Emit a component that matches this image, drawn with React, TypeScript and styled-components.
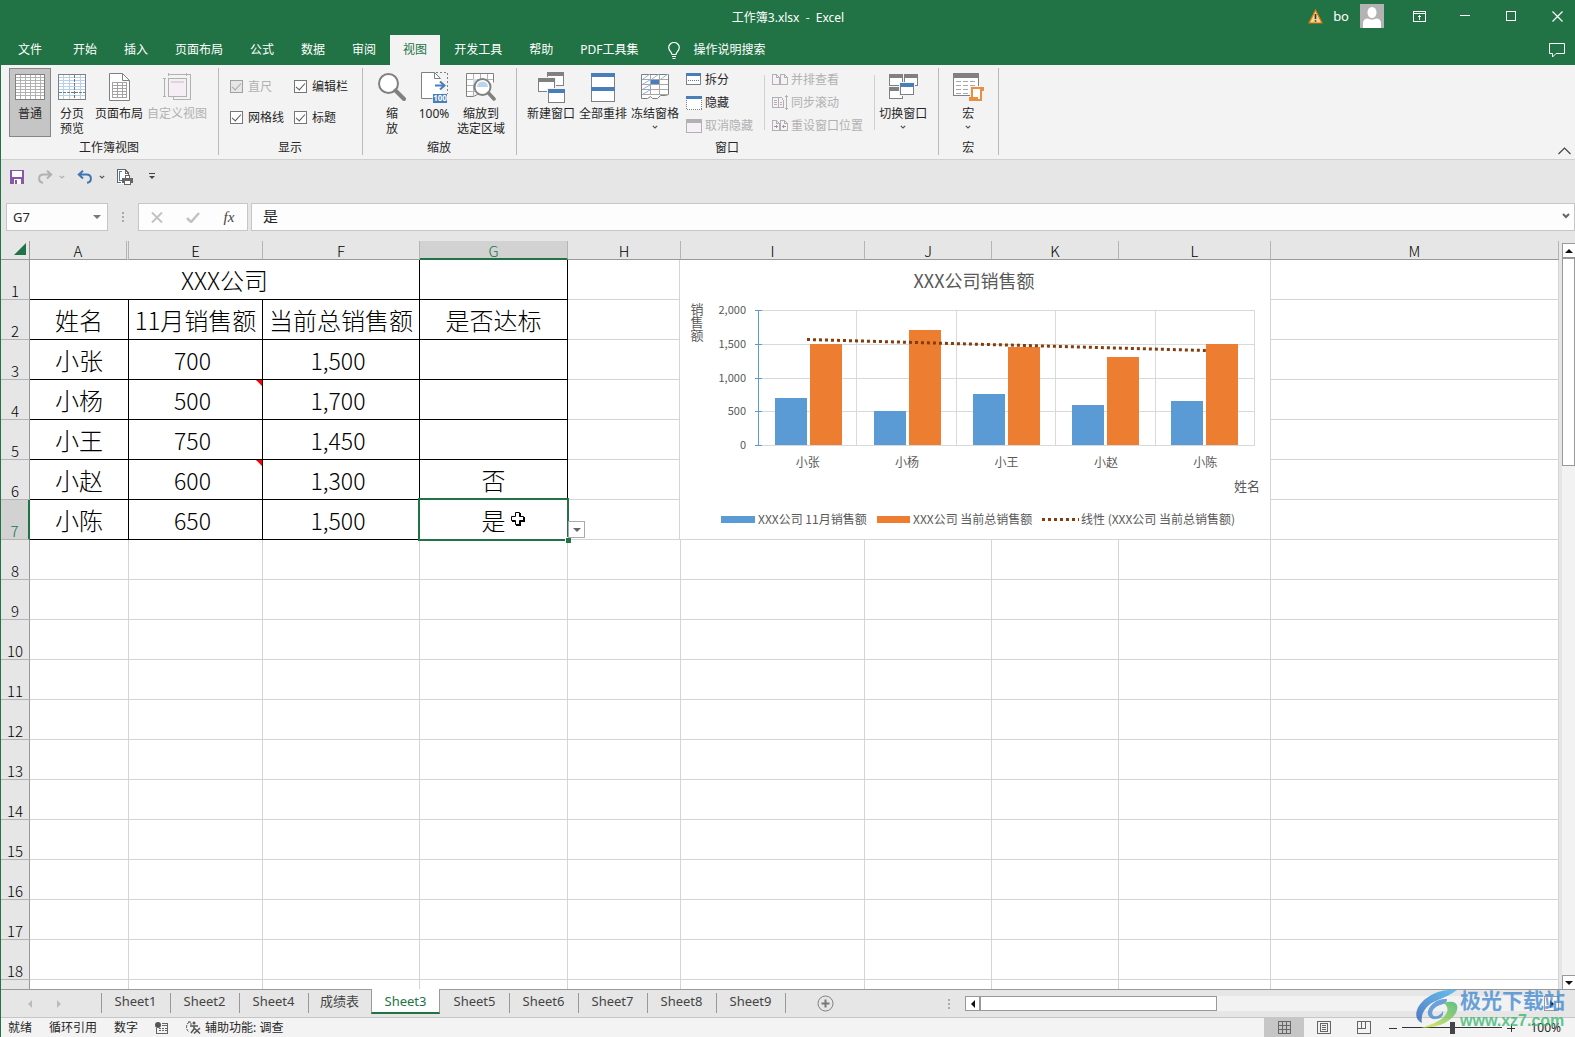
import React from "react";
import styled, { createGlobalStyle, css } from "styled-components";

const color = {
  green: "#217346",
  ribbon: "#f3f3f3",
  chrome: "#e6e6e6",
  line: "#c6c6c6",
  grid: "#d4d4d4",
  ink: "#262626",
  muted: "#b1b1b1",
  icon: "#808080",
  blue: "#4a7ebb",
};

const uiFont = `"Noto Sans", "Noto Sans CJK SC", sans-serif`;
const cellFont = `"Noto Sans CJK SC", "Noto Sans", sans-serif`;

const GlobalStyle = createGlobalStyle`
  *, *::before, *::after { box-sizing: border-box; }
  body { margin: 0; background: ${color.chrome}; }
  button, input { font: inherit; color: inherit; margin: 0; padding: 0; }
  button { border: 0; background: none; }
  svg { display: block; flex: none; }
`;

const Window = styled.div`
  position: relative;
  display: flex;
  flex-direction: column;
  height: 100vh;
  overflow: hidden;
  border-left: 1px solid ${color.green};
  background: ${color.chrome};
  color: ${color.ink};
  font: 12px/16px ${uiFont};
`;

/* ---------- title bar and tabs ---------- */

const TitleBar = styled.header`
  display: grid;
  grid-template-columns: 1fr auto 1fr;
  align-items: center;
  height: 35px;
  background: ${color.green};
  color: #fff;
`;

const DocumentTitle = styled.h1`
  grid-column: 2;
  margin: 0;
  font-size: 12px;
  font-weight: 400;
  white-space: pre;
`;

const TitleActions = styled.div`
  display: flex;
  justify-content: flex-end;
  align-items: center;
  gap: 10px;
  height: 32px;
  align-self: start;
`;

const UserName = styled.span`
  font-size: 13px;
`;

const Account = styled.button`
  display: flex;
  align-items: center;
  gap: 11px;
  margin-right: 7px;
`;

const WindowButton = styled.button`
  display: flex;
  align-items: center;
  justify-content: center;
  width: 36px;
  height: 32px;
`;

const TabBar = styled.nav`
  display: flex;
  align-items: stretch;
  gap: 1px;
  height: 30px;
  background: ${color.green};
  color: #fff;
`;

const RibbonTab = styled.button<{ $active?: boolean; $file?: boolean }>`
  padding: 0 ${(p) => (p.$file ? 17 : 13)}px;
  background: ${(p) => (p.$active ? color.ribbon : "transparent")};
  color: ${(p) => (p.$active ? color.green : "#fff")};
  white-space: nowrap;
`;

const TellMe = styled.button`
  display: flex;
  align-items: center;
  gap: 13px;
  margin-left: 16px;
  white-space: nowrap;
`;

const CommentButton = styled.button`
  margin: 0 10px 0 auto;
`;

/* ---------- ribbon ---------- */

const Ribbon = styled.section`
  display: flex;
  height: 95px;
  flex: none;
  padding: 3px 0 4px;
  border-bottom: 1px solid #d2d0ce;
  background: ${color.ribbon};
`;

const Group = styled.div`
  display: flex;
  flex-direction: column;
  padding: 0 9px 0 8px;
  border-right: 1px solid #bababa;
`;

const GroupBody = styled.div`
  display: flex;
  flex: none;
  height: 69px;
`;

const GroupLabel = styled.div`
  padding-top: 4px;
  line-height: 14px;
  text-align: center;
`;

const BigButton = styled.button<{ $pressed?: boolean }>`
  display: flex;
  flex-direction: column;
  align-items: center;
  min-width: 42px;
  padding: 3px 2px 0;
  white-space: pre;
  ${(p) =>
    p.$pressed &&
    css`
      background: #c5c5c5;
      box-shadow: inset 0 0 0 1px #868686;
    `}
  &:disabled {
    color: ${color.muted};
  }
`;

const BigIcon = styled.span`
  display: flex;
  align-items: center;
  justify-content: center;
  height: 32px;
`;

const BigLabel = styled.span`
  padding-top: 3px;
  line-height: 15px;
`;

const MenuMark = styled.span`
  padding-top: 4px;
`;

const CheckGrid = styled.div`
  display: grid;
  grid-template-columns: 64px 59px;
  grid-auto-rows: 31px;
  align-items: center;
  padding: 3px 0 0 3px;
`;

const CheckLabel = styled.label<{ $disabled?: boolean }>`
  display: flex;
  align-items: center;
  gap: 5px;
  color: ${(p) => (p.$disabled ? color.muted : "inherit")};
  white-space: nowrap;
`;

const CheckBox = styled.input`
  appearance: none;
  display: grid;
  place-items: center;
  width: 13px;
  height: 13px;
  border: 1px solid #767676;
  background: #fff;
  &:checked::before {
    content: "";
    width: 9px;
    height: 5px;
    margin-top: -2px;
    border: solid #555;
    border-width: 0 0 1px 1px;
    transform: rotate(-48deg);
  }
  &:disabled {
    border-color: #a0a0a0;
    background: #e6e6e6;
  }
  &:disabled::before {
    border-color: #a8a8a8;
  }
`;

const SmallColumn = styled.div`
  display: flex;
  flex-direction: column;
  padding: 0 11px 0 5px;
`;

const SmallButton = styled.button`
  display: flex;
  align-items: center;
  gap: 3px;
  height: 23px;
  white-space: nowrap;
  &:disabled {
    color: ${color.muted};
  }
`;

const SmallIconSlot = styled.span`
  display: grid;
  place-items: center;
  width: 16px;
`;

const Divider = styled.span`
  width: 1px;
  margin: 7px 2px 7px 0;
  background: #d0d0d0;
`;

const CollapseButton = styled.button`
  align-self: flex-end;
  margin: 0 4px 0 auto;
`;

/* ---------- quick access and formula bar ---------- */

const QuickAccess = styled.div`
  display: flex;
  align-items: center;
  gap: 12px;
  height: 33px;
  flex: none;
  padding-left: 8px;
`;

const QuickButton = styled.button`
  display: flex;
  align-items: center;
  justify-content: center;
  gap: 6px;
  min-width: 12px;
`;

const FormulaRow = styled.div`
  display: flex;
  height: 28px;
  flex: none;
  margin-top: 10px;
  padding-left: 5px;
`;

const Field = styled.div`
  display: flex;
  align-items: center;
  border: 1px solid ${color.line};
  background: #fdfdfd;
`;

const NameField = styled(Field)`
  width: 102px;
  padding: 0 6px;
`;

const TextInput = styled.input<{ $size: number }>`
  flex: 1;
  min-width: 0;
  border: 0;
  outline: 0;
  background: none;
  font-size: ${(p) => p.$size}px;
`;

const Grip = styled.span`
  display: grid;
  place-items: center;
  width: 30px;
`;

const FormulaField = styled(Field)`
  flex: 1;
  margin-left: 3px;
  padding: 0 4px 3px 11px;
`;

const FormulaButton = styled.button`
  display: grid;
  place-items: center;
  width: 36px;
`;

const FxMark = styled.i`
  color: #444;
  font: italic 15px/20px "Liberation Serif", serif;
`;

/* ---------- worksheet ---------- */

const SheetArea = styled.main`
  display: flex;
  flex: 1;
  min-height: 0;
`;

const SheetView = styled.div`
  position: relative;
  flex: 1;
  min-width: 0;
  padding-top: 10px;
  overflow: hidden;
`;

const SheetTable = styled.table`
  width: 100%;
  table-layout: fixed;
  border-collapse: separate;
  border-spacing: 0;
  font-family: ${cellFont};
`;

const Corner = styled.td`
  padding: 0;
  border: solid #999;
  border-width: 0 1px 1px 0;
`;

const CornerMark = styled.div`
  width: 0;
  margin: 0 3px 3px auto;
  border: 6px solid transparent;
  border-right-color: ${color.green};
  border-bottom-color: ${color.green};
`;

const ColumnHead = styled.th<{ $selected?: boolean; $hiddenAfter?: boolean }>`
  height: 19px;
  padding: 2px 0 0;
  border-right: ${(p) => (p.$hiddenAfter ? "3px double" : "1px solid")} #b4b4b4;
  border-bottom: 1px solid #999;
  color: #000;
  font-size: 15px;
  font-weight: 300;
  line-height: 16px;
  ${(p) =>
    p.$selected &&
    css`
      border-bottom: 2px solid ${color.green};
      background: #d2d2d2;
      color: ${color.green};
      line-height: 15px;
    `}
`;

const RowHead = styled.th<{ $selected?: boolean }>`
  height: 40px;
  padding: 0;
  border-right: ${(p) => (p.$selected ? `2px solid ${color.green}` : "1px solid #999")};
  border-bottom: 1px solid #b4b4b4;
  background: ${(p) => (p.$selected ? "#d2d2d2" : "transparent")};
  color: ${(p) => (p.$selected ? color.green : "#000")};
  font-size: 15px;
  font-weight: 300;
  line-height: 16px;
  vertical-align: bottom;
`;

const Cell = styled.td<{ $boxed?: boolean; $numeric?: boolean }>`
  position: relative;
  height: 40px;
  padding: 0 ${(p) => (p.$numeric ? 6 : 0)}px 0 0;
  border: solid ${(p) => (p.$boxed ? "#000" : color.grid)};
  border-width: 0 1px 1px 0;
  background: #fff;
  color: #000;
  font-size: ${(p) => (p.$numeric ? 23 : 24)}px;
  font-weight: 300;
  line-height: 38px;
  text-align: center;
  white-space: nowrap;
`;

const NoteMark = styled.span`
  position: absolute;
  top: 0;
  right: 0;
  border: 3px solid transparent;
  border-top-color: #f00;
  border-right-color: #f00;
`;

const Selection = styled.span`
  position: absolute;
  inset: -2px;
  border: 2px solid ${color.green};
  z-index: 1;
  &::after {
    content: "";
    position: absolute;
    right: -4px;
    bottom: -4px;
    width: 6px;
    height: 6px;
    border: solid #fff;
    border-width: 1px 0 0 1px;
    background: ${color.green};
  }
`;

const ListButton = styled.button`
  position: absolute;
  left: 100%;
  bottom: 1px;
  z-index: 2;
  display: grid;
  place-items: center;
  width: 17px;
  height: 17px;
  margin-left: 1px;
  border: 1px solid #a5abb5;
  background: #fff;
`;

const Pointer = styled.svg`
  position: absolute;
  left: 90px;
  top: 11px;
  z-index: 2;
`;

const ChartFrame = styled.figure`
  position: absolute;
  left: 678px;
  top: 29px;
  margin: 0;
  border: 1px solid ${color.grid};
  border-top: 0;
  background: #fff;
`;

const ChartSvg = styled.svg`
  font-family: ${cellFont};
  fill: #595959;
`;

const ValueAxisTitle = styled.text`
  writing-mode: vertical-rl;
  font-size: 13px;
`;

/* ---------- scroll bars ---------- */

const VerticalScroll = styled.div`
  display: flex;
  flex-direction: column;
  width: 13px;
  flex: none;
  margin: 12px 0 -1px 3px;
  background: #f2f2f2;
`;

const HorizontalScroll = styled.div`
  display: flex;
  flex: 0 1 594px;
  height: 15px;
  margin: 6px 16px 0 15px;
  background: #f2f2f2;
`;

const ScrollButton = styled.button`
  display: grid;
  place-items: center;
  flex: none;
  width: 15px;
  height: 15px;
  border: 1px solid #999;
  background: #fff;
  ${VerticalScroll} & {
    width: 13px;
    border-right: 0;
  }
`;

const ScrollTrack = styled.div`
  flex: 1;
`;

const ScrollThumb = styled.div<{ $vertical?: boolean }>`
  width: ${(p) => (p.$vertical ? "100%" : "42%")};
  height: ${(p) => (p.$vertical ? "29%" : "100%")};
  border: 1px solid #999;
  background: #fff;
`;

/* ---------- sheet tabs and status ---------- */

const SheetBar = styled.div`
  display: flex;
  height: 29px;
  flex: none;
  border-top: 1px solid #999;
  border-bottom: 1px solid ${color.line};
`;

const SheetNav = styled.div`
  display: flex;
  align-items: center;
  gap: 23px;
  width: 100px;
  padding-left: 26px;
`;

const SheetTabs = styled.div`
  display: flex;
  align-items: flex-start;
`;

const SheetTab = styled.button<{ $active?: boolean; $short?: boolean }>`
  position: relative;
  min-width: ${(p) => (p.$short ? 0 : 69)}px;
  height: 23px;
  padding: 0 12px 1px;
  color: #444;
  font-size: 13px;
  line-height: 20px;
  &::before {
    content: "";
    position: absolute;
    left: 0;
    top: 3px;
    bottom: 0;
    width: 1px;
    background: #999;
  }
  &:last-child {
    box-shadow: 1px 0 #999;
    clip-path: inset(3px -1px 0 0);
  }
  ${(p) =>
    p.$active &&
    css`
      height: 25px;
      margin-top: -1px;
      padding-bottom: 0;
      border: solid #999;
      border-width: 0 1px;
      border-bottom: 2px solid ${color.green};
      background: #fff;
      color: ${color.green};
      &::before {
        display: none;
      }
      & + button::before {
        display: none;
      }
    `}
`;

const AddSheet = styled.button`
  margin-left: 32px;
`;

const SheetGrip = styled.span`
  display: flex;
  align-items: center;
  margin-left: auto;
`;

const StatusBar = styled.footer`
  display: flex;
  align-items: center;
  height: 19px;
  flex: none;
  padding-left: 7px;
  background: ${color.ribbon};
  line-height: 18px;
  white-space: nowrap;
`;

const StatusItems = styled.div`
  display: flex;
  align-items: center;
  gap: 17px;
`;

const StatusNote = styled.span`
  display: flex;
  align-items: center;
  gap: 4px;
`;

const ViewSwitch = styled.div`
  display: flex;
  align-self: stretch;
  margin-left: auto;
`;

const ViewButton = styled.button<{ $active?: boolean }>`
  display: grid;
  place-items: center;
  width: 40px;
  background: ${(p) => (p.$active ? "#c6c6c6" : "transparent")};
`;

const ZoomControl = styled.div`
  display: flex;
  align-items: center;
  gap: 5px;
  margin: 0 14px 0 5px;
`;

const ZoomRange = styled.input`
  appearance: none;
  width: 100px;
  height: 12px;
  background: linear-gradient(#333, #333) center / 100% 1px no-repeat;
  &::-webkit-slider-thumb {
    appearance: none;
    width: 5px;
    height: 12px;
    background: #444;
  }
`;

const ZoomValue = styled.span`
  padding-left: 10px;
`;

const Watermark = styled.aside`
  position: absolute;
  right: 10px;
  bottom: 6px;
  z-index: 5;
  display: flex;
  align-items: center;
  gap: 2px;
  opacity: 0.75;
  pointer-events: none;
`;

const WatermarkName = styled.div`
  color: #3b86cf;
  font: 700 21px/24px "Noto Sans CJK SC", sans-serif;
`;

const WatermarkSite = styled.div`
  color: #35b56b;
  font: 700 16px/20px "Liberation Sans", sans-serif;
`;

/* ---------- icons ---------- */

type SvgProps = { w: number; h: number; children: React.ReactNode; crisp?: boolean };

const Svg = ({ w, h, children, crisp = true }: SvgProps) => (
  <svg
    width={w}
    height={h}
    viewBox={`0 0 ${w} ${h}`}
    fill="none"
    stroke={color.icon}
    shapeRendering={crisp ? "crispEdges" : "auto"}
    aria-hidden="true"
  >
    {children}
  </svg>
);

const NormalIcon = () => (
  <Svg w={30} h={26}>
    <rect x=".5" y=".5" width="29" height="25" fill="#fff" />
    <path d="M1 3.5h28M1 6.5h28M1 9.5h28M1 12.5h28M1 15.5h28M1 18.5h28M1 21.5h28M5.5 1v24M10.5 1v24M15.5 1v24M20.5 1v24M25.5 1v24" stroke="#b1b1b1" />
  </Svg>
);

const PageBreakIcon = () => (
  <Svg w={28} h={26}>
    <rect x=".5" y=".5" width="27" height="25" fill="#fff" />
    <path d="M1 3.5h26M1 6.5h26M1 9.5h26M1 12.5h26M1 15.5h26M1 21.5h26M5.5 1v24M11.5 1v24M22.5 1v24" stroke="#b9d0ec" />
    <path d="M16.5 1v24M1 18.5h26" stroke="#777" strokeDasharray="3 1" />
  </Svg>
);

const PageLayoutIcon = () => (
  <Svg w={21} h={28}>
    <path d="M.5.5h13l7 7v20H.5z" fill="#fff" shapeRendering="auto" />
    <path d="M13.5.5v7h7" shapeRendering="auto" />
    <path d="M3.5 9.5h14v15h-14zM3.5 12.5h14M3.5 15.5h14M3.5 18.5h14M3.5 21.5h14M8.5 9.5v15M13.5 9.5v15" stroke="#a3a3a3" />
  </Svg>
);

const CustomViewIcon = () => (
  <Svg w={28} h={28}>
    <g stroke={color.muted}>
      <rect x="5.5" y="5.5" width="18" height="18" fill="#f5eef5" />
      <path d="M5.5 0v3M23.5 0v3M5.5 1.5h18M0 5.5h3M0 23.5h3M1.5 5.5v18M24 1.5h3.5v25h-17V24" />
      <path d="M8 8.5h13M8 9.5h13" stroke="#dcd5dc" />
    </g>
  </Svg>
);

const ZoomIcon = () => (
  <Svg w={28} h={28} crisp={false}>
    <circle cx="10.5" cy="10.5" r="9.5" fill="#fff" strokeWidth="2" />
    <path d="M17.5 17.5l8.5 8.5" strokeWidth="4" strokeLinecap="round" />
  </Svg>
);

const HundredBadge = styled.text`
  fill: #fff;
  stroke: none;
  font: 700 8px "Noto Sans", sans-serif;
`;

const Zoom100Icon = () => (
  <Svg w={27} h={31}>
    <path d="M.5.5h13l6 6v19H.5z" fill="#fff" stroke="none" />
    <path d="M19.500 6.500l-6-6H.5v26h11M13.500.5v6h6" shapeRendering="auto" />
    <path d="M15 .5h11.500v21" strokeDasharray="2 2" />
    <path d="M14 13.500h10M19 9.500l4.500 4-4.500 4" stroke={color.blue} strokeWidth="2" shapeRendering="auto" />
    <rect x="12" y="22" width="14" height="9" fill={color.blue} stroke="none" />
    <HundredBadge x="19" y="29" textAnchor="middle">100</HundredBadge>
  </Svg>
);

const ZoomSelectionIcon = () => (
  <Svg w={30} h={30} crisp={false}>
    <path d="M.5 24.500V1.500h27v9M.5 24.500h7l4-2h3" fill="#fff" />
    <path d="M1 7.500h26M1 13.500h8M1 19.500h8M7.500 2v22M14.500 2v5M21.500 2v5" stroke="#b1b1b1" />
    <path d="M7 7h4v6H7z" fill="#cfe0f3" stroke="none" />
    <circle cx="16.500" cy="15" r="8" fill="#fff" strokeWidth="2" />
    <path d="M11 15a5.500 5.500 0 0111 0z" fill="#bcd3ee" stroke="none" />
    <path d="M22.500 21l5.500 6" strokeWidth="3.500" strokeLinecap="round" />
  </Svg>
);

const MiniWindow = ({ x, y, w, h, fill = color.icon }: { x: number; y: number; w: number; h: number; fill?: string }) => (
  <g>
    <rect x={x - 1} y={y - 1} width={w + 2} height={h + 2} fill={color.ribbon} stroke="none" />
    <rect x={x + 0.5} y={y + 0.5} width={w - 1} height={h - 1} fill="#fff" />
    <rect x={x} y={y} width={w} height={4} fill={fill} stroke="none" />
  </g>
);

const NewWindowIcon = () => (
  <Svg w={27} h={31}>
    <MiniWindow x={9} y={0} w={17} h={14} />
    <MiniWindow x={0} y={6} w={17} h={14} />
    <MiniWindow x={10} y={17} w={17} h={14} fill={color.blue} />
  </Svg>
);

const ArrangeIcon = () => (
  <Svg w={24} h={29}>
    <rect x=".5" y=".5" width="23" height="28" fill="#fff" />
    <path d="M0 0h24v4H0zM0 14h24v4H0z" fill={color.blue} stroke="none" />
  </Svg>
);

const FreezeIcon = () => (
  <Svg w={28} h={26} crisp={false}>
    <path d="M.5 24.500V.5h27v20l-3 1h-5l-3 3h-5l-2-2-3 2z" fill="#fff" />
    <path d="M1 5.500h26M1 10.500h26M1 15.500h26M1 20.500h26M9.500 1v20M18.500 1v20" stroke="#a8a8a8" />
    <path d="M2 5l7-5M11 5l7-5M20 5l7-5M2 10l7-4M2 15l7-4M2 20l7-4" stroke="#8fb4e0" />
    <rect x="10" y="6" width="8" height="4" fill={color.blue} stroke="none" />
  </Svg>
);

const SwitchIcon = () => (
  <Svg w={29} h={26}>
    <MiniWindow x={0} y={0} w={14} h={12} />
    <MiniWindow x={15} y={0} w={14} h={12} />
    <MiniWindow x={0} y={13} w={14} h={12} />
    <MiniWindow x={11} y={9} w={14} h={12} fill={color.blue} />
  </Svg>
);

const MacroIcon = () => (
  <Svg w={31} h={28}>
    <rect x=".5" y=".5" width="25" height="22" fill="#fff" />
    <rect width="26" height="5" fill={color.icon} stroke="none" />
    <path d="M3 8.500h20M3 12.500h20M3 16.500h14M3 20.500h12" stroke="#a8a8a8" strokeDasharray="5 2" />
    <path d="M17 13h14v6h-2v9H15v-5h2z" fill={color.ribbon} stroke="none" />
    <path d="M19 15h9v12h-9z" fill="#fff" stroke="#ea8f3f" strokeWidth="2" />
    <path d="M19 14h12v4h-4v-2h-8zM16 24h9v4h-9z" fill="#ea8f3f" stroke="none" />
  </Svg>
);

const SplitIcon = () => (
  <Svg w={16} h={13}>
    <rect x=".5" y=".5" width="14" height="11" fill="#fff" />
    <rect width="15" height="3" fill={color.blue} stroke="none" />
    <path d="M2 7.500h12" stroke={color.blue} strokeDasharray="1 1" />
  </Svg>
);

const HideIcon = () => (
  <Svg w={16} h={14}>
    <rect x=".5" y=".5" width="15" height="13" fill="#fff" strokeDasharray="1 1" />
    <rect width="16" height="3" fill={color.blue} stroke="none" />
  </Svg>
);

const UnhideIcon = () => (
  <Svg w={16} h={14}>
    <rect x=".5" y=".5" width="15" height="13" fill="#f5f0f5" stroke={color.muted} />
    <rect width="16" height="4" fill={color.muted} stroke="none" />
  </Svg>
);

const pagesPath = "M.5 1.500h4l3 3v7h-7zM4.500 1.500v3h3M8.500 1.500h4l3 3v7h-7zM12.500 1.500v3h3";

const SideBySideIcon = () => (
  <Svg w={16} h={13}>
    <path d={pagesPath} fill="#f7f0f7" stroke={color.muted} />
  </Svg>
);

const SyncScrollIcon = () => (
  <Svg w={16} h={15}>
    <path d="M.5 2.500h6v10h-6zM6.500 2.500h3l2 3v7h-5M2 5.500h3M2 7.500h3M2 9.500h3M8 7.500h2M8 9.500h2M14.500 0v15M13 1.500h3M13 13.500h3" fill="#f7f0f7" stroke={color.muted} />
  </Svg>
);

const ResetWindowIcon = () => (
  <Svg w={16} h={13}>
    <path d={pagesPath} fill="#f7f0f7" stroke={color.muted} />
    <path d="M2 7.500h4M4.500 6v3M10 7.500h4M11.500 6v3" stroke="#999" />
  </Svg>
);

const ChevronDown = ({ stroke = "#555" }: { stroke?: string }) => (
  <Svg w={6} h={4} crisp={false}>
    <path d="M.8.8L3 3 5.200.8" stroke={stroke} strokeWidth="1.200" />
  </Svg>
);

const CollapseIcon = () => (
  <Svg w={13} h={8} crisp={false}>
    <path d="M.5 7l6-6 6 6" stroke="#444" strokeWidth="1.200" />
  </Svg>
);

const Triangle = ({ dir, fill = "#111" }: { dir: "up" | "down" | "left" | "right"; fill?: string }) => {
  const shapes = { up: "0,5 8,5 4,1", down: "0,1 8,1 4,5", left: "5,0 5,8 1,4", right: "1,0 1,8 5,4" };
  const flat = dir === "up" || dir === "down";
  return (
    <Svg w={flat ? 8 : 6} h={flat ? 6 : 8} crisp={false}>
      <polygon points={shapes[dir]} fill={fill} stroke="none" />
    </Svg>
  );
};

const GripIcon = () => (
  <Svg w={2} h={10}>
    <path d="M0 0h2v2H0zM0 4h2v2H0zM0 8h2v2H0z" fill="#a8a8a8" stroke="none" />
  </Svg>
);

const SaveIcon = () => (
  <Svg w={16} h={14}>
    <path d="M1 0h14v14H1z" fill="#8b57a8" stroke="none" />
    <path d="M3 1h10v6H3zM4 9h8v5H4z" fill="#fff" stroke="none" />
    <path d="M6 10h2v4H6zM4 9h1v5H4z" fill="#8b57a8" stroke="none" />
  </Svg>
);

const UndoIcon = () => (
  <Svg w={16} h={14} crisp={false}>
    <path d="M6 .8L1.800 4.500 6 8.500M2 4.500h7.500c6 0 5.500 8 .5 8.300" stroke="#3f76b5" strokeWidth="2" />
  </Svg>
);

const RedoIcon = () => (
  <Svg w={16} h={14} crisp={false}>
    <path d="M10 .8l4.200 3.700L10 8.500M14 4.500H6.500c-6 0-5.500 8-.5 8.300" stroke="#b1b1b1" strokeWidth="2" />
  </Svg>
);

const PrintIcon = () => (
  <Svg w={17} h={16}>
    <path d="M.5.5h8l3 3v11H.5z" fill="#fff" stroke="none" />
    <path d="M4 13.500H.5V.5h7.500l3 3v2M8 .5v3.500h3" stroke="#666" />
    <path d="M5 2.500H2.500v9H5" stroke={color.blue} />
    <path d="M8.500 9V6.500h4V9" fill="#fff" stroke="#666" />
    <path d="M5 9h11v5H5z" fill="#666" stroke="none" />
    <path d="M7.500 11.500h6v4h-6z" fill="#fff" stroke="#666" />
  </Svg>
);

const CustomizeIcon = () => (
  <Svg w={6} h={7} crisp={false}>
    <path d="M0 .5h6" stroke="#444" />
    <polygon points="0,3 6,3 3,6" fill="#444" stroke="none" />
  </Svg>
);

const CancelIcon = () => (
  <Svg w={12} h={11} crisp={false}>
    <path d="M1 .5l10 10M11 .5l-10 10" stroke="#c2c2c2" strokeWidth="2" />
  </Svg>
);

const EnterIcon = () => (
  <Svg w={14} h={11} crisp={false}>
    <path d="M1 6l4 4 8-9" stroke="#c2c2c2" strokeWidth="2.500" />
  </Svg>
);

const ExpandIcon = () => (
  <Svg w={8} h={6} crisp={false}>
    <path d="M1 1l3 3 3-3" stroke="#666" strokeWidth="2" />
  </Svg>
);

const WarningIcon = () => (
  <Svg w={15} h={15} crisp={false}>
    <path d="M7.500 1l6.500 13H1z" fill="#fbd38a" stroke="#d9770f" strokeWidth="1.200" />
    <path d="M7.500 5v5M7.500 11.200v1.500" stroke="#333" strokeWidth="1.600" />
  </Svg>
);

const AvatarIcon = () => (
  <Svg w={24} h={24} crisp={false}>
    <path d="M0 0h24v24H0z" fill="#b3b3b3" stroke="none" />
    <ellipse cx="12" cy="8.500" rx="4.500" ry="5.500" fill="#fff" stroke="none" />
    <path d="M3 24v-5c0-3 2-4.500 5-4.500 2 1.500 6 1.500 8 0 3 0 5 1.500 5 4.500v5z" fill="#fff" stroke="none" />
  </Svg>
);

const RibbonOptionsIcon = () => (
  <Svg w={13} h={11}>
    <path d="M.5.5h12v10H.5zM1 2.500h12M6.500 9V4.500M4.500 6.500l2-2 2 2" stroke="#fff" />
  </Svg>
);

const MinimizeIcon = () => (
  <Svg w={10} h={10}>
    <path d="M0 4.500h10" stroke="#fff" />
  </Svg>
);

const MaximizeIcon = () => (
  <Svg w={10} h={10}>
    <path d="M.5.5h9v9h-9z" stroke="#fff" />
  </Svg>
);

const CloseIcon = () => (
  <Svg w={11} h={11} crisp={false}>
    <path d="M.5.5l10 10M10.500.5l-10 10" stroke="#fff" strokeWidth="1.200" />
  </Svg>
);

const CommentIcon = () => (
  <Svg w={16} h={15} crisp={false}>
    <path d="M.5.5h15v10H7l-3.500 3.500v-3.500h-3z" stroke="#fff" />
  </Svg>
);

const BulbIcon = () => (
  <Svg w={12} h={17} crisp={false}>
    <path d="M4 12.500c0-2.500-3.300-3.500-3.300-7a5.300 5 0 0110.600 0c0 3.500-3.300 4.500-3.300 7zM4 14.500h4M4.500 16.500h3" stroke="#fff" strokeWidth="1.200" />
  </Svg>
);

const AddIcon = () => (
  <Svg w={17} h={17} crisp={false}>
    <circle cx="8.500" cy="8.500" r="7.500" stroke="#808080" />
    <path d="M8.500 4.500v8M4.500 8.500h8" stroke="#777" strokeWidth="2" />
  </Svg>
);

const RecordIcon = () => (
  <Svg w={13} h={12}>
    <path d="M1.500 6v5.500h11v-10H7" stroke="#666" />
    <path d="M7 3.500h5" stroke="#666" />
    <path d="M4 6.500h8M4 8.500h8" stroke="#666" strokeDasharray="2 1" />
    <circle cx="3" cy="3" r="3" fill="#555" stroke="none" shapeRendering="auto" />
  </Svg>
);

const AccessibilityIcon = () => (
  <Svg w={16} h={13} crisp={false}>
    <path d="M4.500 1C1 2.500.5 8 3.500 10.500M3 1h3v3" stroke="#555" strokeDasharray="3 1" />
    <circle cx="9" cy="2" r="1.500" fill="#555" stroke="none" />
    <path d="M5 5h8M9 5v3l-3 4M9 7l6 5.500M15 7l-6 5.500" stroke="#555" strokeWidth="1.500" />
  </Svg>
);

const StatusNormalIcon = () => (
  <Svg w={13} h={13}>
    <path d="M.5.5h12v12H.5zM.5 4.500h12M.5 8.500h12M4.500.5v12M8.500.5v12" stroke="#666" />
  </Svg>
);

const StatusLayoutIcon = () => (
  <Svg w={14} h={13}>
    <path d="M.5.5h13v12H.5zM3.500 2.500h7v8h-7zM5 4.500h4M5 6.500h4M5 8.500h4" stroke="#666" />
  </Svg>
);

const StatusBreakIcon = () => (
  <Svg w={14} h={13}>
    <path d="M.5.5h13v12H.5zM4.500.5v7h4v-7M.5 7.500h8" stroke="#666" />
  </Svg>
);

const WatermarkLogo = () => (
  <svg width="42" height="40" viewBox="0 0 42 40" aria-hidden="true">
    <defs>
      <linearGradient id="wmBlue" x1="1" y1="0" x2="0" y2="1">
        <stop offset="0" stopColor="#3cb4f0" />
        <stop offset="1" stopColor="#1c56b4" />
      </linearGradient>
      <linearGradient id="wmGreen" x1="1" y1="0" x2="0" y2="1">
        <stop offset="0" stopColor="#2fae62" />
        <stop offset="1" stopColor="#dde83a" />
      </linearGradient>
    </defs>
    <path d="M41 1C24-1 6 8 1 21c-2 6 0 11 5 13-2-10 5-19 16-23 7-3 14-6 19-10z" fill="url(#wmBlue)" />
    <path d="M31 10c-9-1-17 5-19 12-1 5 3 9 8 8 5 0 8-4 7-8-2 4-6 6-9 5-4-2-1-9 6-11 3-1 7-1 7-6z" fill="#3f86d0" />
    <path d="M28 14c9-3 15 0 13 7-3 10-17 18-36 18 9-3 21-7 25-14 3-5 1-8-2-11z" fill="url(#wmGreen)" />
  </svg>
);

/* ---------- data ---------- */

const ribbonTabs = ["开始", "插入", "页面布局", "公式", "数据", "审阅", "视图", "开发工具", "帮助", "PDF工具集"];

const columns = [
  { name: "A", width: 99, hiddenAfter: true },
  { name: "E", width: 134 },
  { name: "F", width: 157 },
  { name: "G", width: 148 },
  { name: "H", width: 113 },
  { name: "I", width: 184 },
  { name: "J", width: 127 },
  { name: "K", width: 127 },
  { name: "L", width: 152 },
  { name: "M", width: undefined },
];

const people = [
  { name: "小张", november: 700, total: 1500, note: false, reached: "" },
  { name: "小杨", november: 500, total: 1700, note: true, reached: "" },
  { name: "小王", november: 750, total: 1450, note: false, reached: "" },
  { name: "小赵", november: 600, total: 1300, note: true, reached: "否" },
  { name: "小陈", november: 650, total: 1500, note: false, reached: "是" },
];

const emptyRows = Array.from({ length: 12 }, (_, i) => String(i + 8));
const sheets = ["Sheet1", "Sheet2", "Sheet4", "成绩表", "Sheet3", "Sheet5", "Sheet6", "Sheet7", "Sheet8", "Sheet9"];

/* ---------- composed parts ---------- */

type BigProps = { icon: React.ReactNode; label: string; pressed?: boolean; disabled?: boolean; menu?: boolean };

const Big = ({ icon, label, pressed, disabled, menu }: BigProps) => (
  <BigButton $pressed={pressed} disabled={disabled}>
    <BigIcon>{icon}</BigIcon>
    <BigLabel>{label}</BigLabel>
    {menu && (
      <MenuMark>
        <ChevronDown />
      </MenuMark>
    )}
  </BigButton>
);

const Small = ({ icon, label, disabled }: { icon: React.ReactNode; label: string; disabled?: boolean }) => (
  <SmallButton disabled={disabled}>
    <SmallIconSlot>{icon}</SmallIconSlot>
    {label}
  </SmallButton>
);

const Check = ({ label, disabled }: { label: string; disabled?: boolean }) => (
  <CheckLabel $disabled={disabled}>
    <CheckBox type="checkbox" defaultChecked disabled={disabled} />
    {label}
  </CheckLabel>
);

const EmptyCells = ({ count }: { count: number }) => (
  <>
    {Array.from({ length: count }, (_, i) => (
      <Cell key={i} />
    ))}
  </>
);

const plot = { left: 78, right: 575, top: 50, bottom: 185 };
const step = (plot.right - plot.left) / people.length;
const ticks = [0, 500, 1000, 1500, 2000];
const yOf = (value: number) => Math.round(plot.bottom - (value / 2000) * (plot.bottom - plot.top));

const SalesChart = () => (
  <ChartFrame>
    <ChartSvg width="590" height="279" viewBox="0 0 590 279" role="img" aria-label="XXX公司销售额">
      <text x="294" y="28" fontSize="18" textAnchor="middle">XXX公司销售额</text>
      <ValueAxisTitle x="17" y="43">销售额</ValueAxisTitle>
      <g shapeRendering="crispEdges">
        {ticks.map((v) => (
          <g key={v}>
            <line x1={plot.left} x2={plot.right} y1={yOf(v) + 0.5} y2={yOf(v) + 0.5} stroke="#d9d9d9" />
            <line x1={plot.left - 3} x2={plot.left + 4} y1={yOf(v) + 0.5} y2={yOf(v) + 0.5} stroke="#5b9bd5" />
          </g>
        ))}
        {people.map((p, i) => {
          const x = Math.round(plot.left + (i + 1) * step) - 0.5;
          return <line key={p.name} x1={x} x2={x} y1={plot.top} y2={plot.bottom} stroke="#d9d9d9" />;
        })}
        <line x1={plot.left + 0.5} x2={plot.left + 0.5} y1={plot.top} y2={plot.bottom} stroke="#5b9bd5" />
        {people.map((p, i) => {
          const x = Math.round(plot.left + i * 99 + 17);
          return (
            <g key={p.name}>
              <rect x={x} y={yOf(p.november)} width="32" height={plot.bottom - yOf(p.november)} fill="#5b9bd5" />
              <rect x={x + 35} y={yOf(p.total)} width="32" height={plot.bottom - yOf(p.total)} fill="#ed7d31" />
            </g>
          );
        })}
      </g>
      <line x1="127" y1="79.500" x2="526" y2="90.500" stroke="#843c0c" strokeWidth="3" strokeDasharray="3 3" />
      {ticks.map((v) => (
        <text key={v} x="66" y={yOf(v) + 4} fontSize="11" textAnchor="end">{v.toLocaleString("en-US")}</text>
      ))}
      {people.map((p, i) => (
        <text key={p.name} x={plot.left + (i + 0.5) * step} y="207" fontSize="12" textAnchor="middle">{p.name}</text>
      ))}
      <text x="580" y="231" fontSize="13" textAnchor="end">姓名</text>
      <rect x="41" y="256" width="34" height="7" fill="#5b9bd5" />
      <text x="78" y="264" fontSize="12">XXX公司 11月销售额</text>
      <rect x="197" y="256" width="33" height="7" fill="#ed7d31" />
      <text x="233" y="264" fontSize="12">XXX公司 当前总销售额</text>
      <line x1="362" y1="259.500" x2="399" y2="259.500" stroke="#843c0c" strokeWidth="3" strokeDasharray="3 3" />
      <text x="401" y="264" fontSize="12">线性 (XXX公司 当前总销售额)</text>
    </ChartSvg>
  </ChartFrame>
);

const Worksheet = () => (
  <SheetView>
    <SheetTable>
      <colgroup>
        <col width={29} />
        {columns.map((c) => (
          <col key={c.name} width={c.width} />
        ))}
      </colgroup>
      <thead>
        <tr>
          <Corner><CornerMark /></Corner>
          {columns.map((c) => (
            <ColumnHead key={c.name} scope="col" $selected={c.name === "G"} $hiddenAfter={c.hiddenAfter}>{c.name}</ColumnHead>
          ))}
        </tr>
      </thead>
      <tbody>
        <tr>
          <RowHead scope="row">1</RowHead>
          <Cell colSpan={3} $boxed>XXX公司</Cell>
          <Cell $boxed />
          <EmptyCells count={6} />
        </tr>
        <tr>
          <RowHead scope="row">2</RowHead>
          {["姓名", "11月销售额", "当前总销售额", "是否达标"].map((t) => (
            <Cell key={t} $boxed>{t}</Cell>
          ))}
          <EmptyCells count={6} />
        </tr>
        {people.map((p, i) => {
          const active = i === people.length - 1;
          return (
            <tr key={p.name}>
              <RowHead scope="row" $selected={active}>{i + 3}</RowHead>
              <Cell $boxed>{p.name}</Cell>
              <Cell $boxed $numeric>{p.november}{p.note && <NoteMark />}</Cell>
              <Cell $boxed $numeric>{p.total.toLocaleString("en-US")}</Cell>
              <Cell $boxed>
                {p.reached}
                {active && (
                  <>
                    <Selection />
                    <ListButton aria-label="选择"><Triangle dir="down" fill="#666" /></ListButton>
                    <Pointer width="16" height="16" viewBox="0 0 16 16" aria-hidden="true">
                      <path d="M6 2h5v4h4v5h-4v4H6v-4H2V6h4z" fill="#000" />
                      <path d="M5.500 1.500h4v4h4v4h-4v4h-4v-4h-4v-4h4z" fill="#fff" stroke="#000" />
                    </Pointer>
                  </>
                )}
              </Cell>
              <EmptyCells count={6} />
            </tr>
          );
        })}
        {emptyRows.map((n) => (
          <tr key={n}>
            <RowHead scope="row">{n}</RowHead>
            <EmptyCells count={10} />
          </tr>
        ))}
      </tbody>
    </SheetTable>
    <SalesChart />
  </SheetView>
);

export default function App() {
  return (
    <Window>
      <GlobalStyle />
      <TitleBar>
        <DocumentTitle>{"工作簿3.xlsx  -  Excel"}</DocumentTitle>
        <TitleActions>
          <WarningIcon />
          <Account>
            <UserName>bo</UserName>
            <AvatarIcon />
          </Account>
          <WindowButton aria-label="功能区显示选项"><RibbonOptionsIcon /></WindowButton>
          <WindowButton aria-label="最小化"><MinimizeIcon /></WindowButton>
          <WindowButton aria-label="最大化"><MaximizeIcon /></WindowButton>
          <WindowButton aria-label="关闭"><CloseIcon /></WindowButton>
        </TitleActions>
      </TitleBar>
      <TabBar>
        <RibbonTab $file>文件</RibbonTab>
        {ribbonTabs.map((t) => (
          <RibbonTab key={t} $active={t === "视图"}>{t}</RibbonTab>
        ))}
        <TellMe><BulbIcon />操作说明搜索</TellMe>
        <CommentButton aria-label="批注"><CommentIcon /></CommentButton>
      </TabBar>

      <Ribbon>
        <Group>
          <GroupBody>
            <Big icon={<NormalIcon />} label="普通" pressed />
            <Big icon={<PageBreakIcon />} label={"分页\n预览"} />
            <Big icon={<PageLayoutIcon />} label="页面布局" />
            <Big icon={<CustomViewIcon />} label="自定义视图" disabled />
          </GroupBody>
          <GroupLabel>工作簿视图</GroupLabel>
        </Group>
        <Group>
          <GroupBody>
            <CheckGrid>
              <Check label="直尺" disabled />
              <Check label="编辑栏" />
              <Check label="网格线" />
              <Check label="标题" />
            </CheckGrid>
          </GroupBody>
          <GroupLabel>显示</GroupLabel>
        </Group>
        <Group>
          <GroupBody>
            <Big icon={<ZoomIcon />} label={"缩\n放"} />
            <Big icon={<Zoom100Icon />} label="100%" />
            <Big icon={<ZoomSelectionIcon />} label={"缩放到\n选定区域"} />
          </GroupBody>
          <GroupLabel>缩放</GroupLabel>
        </Group>
        <Group>
          <GroupBody>
            <Big icon={<NewWindowIcon />} label="新建窗口" />
            <Big icon={<ArrangeIcon />} label="全部重排" />
            <Big icon={<FreezeIcon />} label="冻结窗格" menu />
            <SmallColumn>
              <Small icon={<SplitIcon />} label="拆分" />
              <Small icon={<HideIcon />} label="隐藏" />
              <Small icon={<UnhideIcon />} label="取消隐藏" disabled />
            </SmallColumn>
            <Divider />
            <SmallColumn>
              <Small icon={<SideBySideIcon />} label="并排查看" disabled />
              <Small icon={<SyncScrollIcon />} label="同步滚动" disabled />
              <Small icon={<ResetWindowIcon />} label="重设窗口位置" disabled />
            </SmallColumn>
            <Divider />
            <Big icon={<SwitchIcon />} label="切换窗口" menu />
          </GroupBody>
          <GroupLabel>窗口</GroupLabel>
        </Group>
        <Group>
          <GroupBody>
            <Big icon={<MacroIcon />} label="宏" menu />
          </GroupBody>
          <GroupLabel>宏</GroupLabel>
        </Group>
        <CollapseButton aria-label="折叠功能区"><CollapseIcon /></CollapseButton>
      </Ribbon>

      <QuickAccess>
        <QuickButton aria-label="保存"><SaveIcon /></QuickButton>
        <QuickButton aria-label="恢复"><RedoIcon /><ChevronDown stroke="#b1b1b1" /></QuickButton>
        <QuickButton aria-label="撤消"><UndoIcon /><ChevronDown /></QuickButton>
        <QuickButton aria-label="打印预览"><PrintIcon /></QuickButton>
        <QuickButton aria-label="自定义快速访问工具栏"><CustomizeIcon /></QuickButton>
      </QuickAccess>

      <FormulaRow>
        <NameField>
          <TextInput $size={13} aria-label="名称框" defaultValue="G7" />
          <button aria-label="名称列表"><Triangle dir="down" fill="#777" /></button>
        </NameField>
        <Grip><GripIcon /></Grip>
        <Field>
          <FormulaButton aria-label="取消"><CancelIcon /></FormulaButton>
          <FormulaButton aria-label="输入"><EnterIcon /></FormulaButton>
          <FormulaButton aria-label="插入函数"><FxMark>fx</FxMark></FormulaButton>
        </Field>
        <FormulaField>
          <TextInput $size={15} aria-label="编辑栏" defaultValue="是" />
          <button aria-label="展开编辑栏"><ExpandIcon /></button>
        </FormulaField>
      </FormulaRow>

      <SheetArea>
        <Worksheet />
        <VerticalScroll>
          <ScrollButton aria-label="向上滚动"><Triangle dir="up" /></ScrollButton>
          <ScrollTrack><ScrollThumb $vertical /></ScrollTrack>
          <ScrollButton aria-label="向下滚动"><Triangle dir="down" /></ScrollButton>
        </VerticalScroll>
      </SheetArea>

      <SheetBar>
        <SheetNav>
          <button aria-label="上一张"><Triangle dir="left" fill="#bbb" /></button>
          <button aria-label="下一张"><Triangle dir="right" fill="#bbb" /></button>
        </SheetNav>
        <SheetTabs>
          {sheets.map((s) => (
            <SheetTab key={s} $active={s === "Sheet3"} $short={s === "成绩表"}>{s}</SheetTab>
          ))}
        </SheetTabs>
        <AddSheet aria-label="新工作表"><AddIcon /></AddSheet>
        <SheetGrip><GripIcon /></SheetGrip>
        <HorizontalScroll>
          <ScrollButton aria-label="向左滚动"><Triangle dir="left" /></ScrollButton>
          <ScrollTrack><ScrollThumb /></ScrollTrack>
          <ScrollButton aria-label="向右滚动"><Triangle dir="right" /></ScrollButton>
        </HorizontalScroll>
      </SheetBar>

      <StatusBar>
        <StatusItems>
          <span>就绪</span>
          <span>循环引用</span>
          <span>数字</span>
          <RecordIcon />
          <StatusNote><AccessibilityIcon />辅助功能: 调查</StatusNote>
        </StatusItems>
        <ViewSwitch>
          <ViewButton $active aria-label="普通"><StatusNormalIcon /></ViewButton>
          <ViewButton aria-label="页面布局"><StatusLayoutIcon /></ViewButton>
          <ViewButton aria-label="分页预览"><StatusBreakIcon /></ViewButton>
        </ViewSwitch>
        <ZoomControl>
          <button aria-label="缩小"><Svg w={8} h={8}><path d="M0 4.500h8" stroke="#333" /></Svg></button>
          <ZoomRange type="range" min={0} max={100} defaultValue={50} aria-label="显示比例" />
          <button aria-label="放大"><Svg w={8} h={8}><path d="M0 4.500h8M4.500 0v8" stroke="#333" /></Svg></button>
          <ZoomValue>100%</ZoomValue>
        </ZoomControl>
      </StatusBar>

      <Watermark>
        <WatermarkLogo />
        <div>
          <WatermarkName>极光下载站</WatermarkName>
          <WatermarkSite>www.xz7.com</WatermarkSite>
        </div>
      </Watermark>
    </Window>
  );
}
